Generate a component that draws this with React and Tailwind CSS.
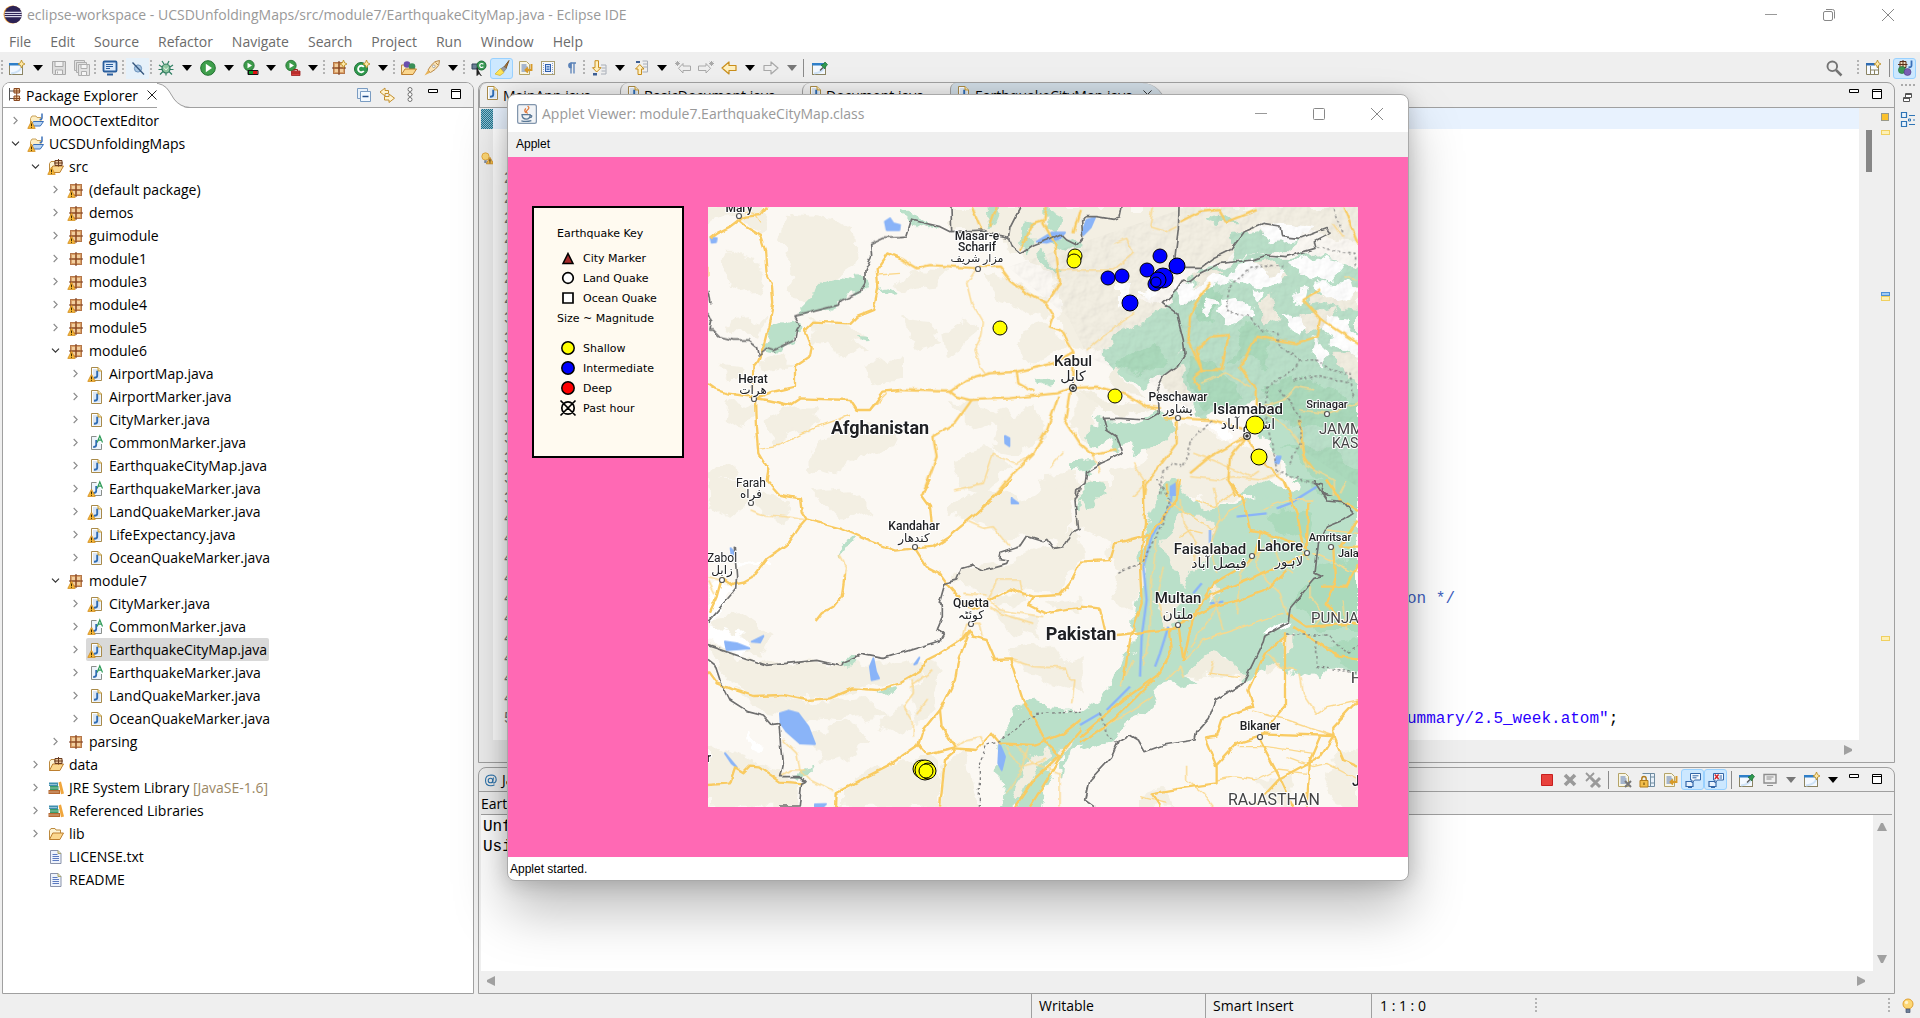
import React from "react";

/* ---------- icons (16 x 16 grid) ---------- */

const warn = (
  <g>
    <path d="M3.5 8.2 L7.2 15.4 H-.2 Z" fill="#f7b838" stroke="#d08a1a" strokeWidth=".8" strokeLinejoin="round" />
    <path d="M3.5 10.5v2.600M3.5 13.800v1" stroke="#3a2a00" strokeWidth="1" />
  </g>
);
const pkg = (
  <g>
    <rect x="2.5" y="2.5" width="11" height="11" fill="#d9a066" stroke="#b5774a" />
    <path d="M4 4h3v3H4zM9 4h3v3H9zM4 9h3v3H4zM9 9h3v3H9z" fill="#f2cf9f" />
    <path d="M8 1v14M1 8h14" stroke="#7a3b1c" strokeWidth="1.1" />
  </g>
);
const page = (
  <g>
    <path d="M3.5 1.5h6.5l3.5 3.5v9.5h-10z" fill="#fff" stroke="#a88a4a" />
    <path d="M5 3h4.5v3h3v7.5H5z" fill="#dbe7f5" />
    <path d="M10 1.5V5h3.5" fill="#f5e3b5" stroke="#c79a2c" />
  </g>
);
const jpage = (
  <g>
    {page}
    <path d="M9.2 4.8v5q0 2-3.2 2" fill="none" stroke="#2f6cb3" strokeWidth="1.9" />
  </g>
);
const apage = (
  <g>
    <path d="M8.5 1.5h-5v13h10V9" fill="#eef4fb" stroke="#8a8f8a" />
    <path d="M8.2 5v5q0 2-3 2" fill="none" stroke="#2f6cb3" strokeWidth="1.8" />
    <path d="M9.2 7.5 11.8.8l2.7 6.7M10.2 5.2h3.3" fill="none" stroke="#2c9a57" strokeWidth="1.2" />
  </g>
);
const folder = (
  <g>
    <path d="M1.5 13.5v-9l1.5-2h4l1 1.5h4.5v3" fill="#fdf3d3" stroke="#bd8a3e" />
    <path d="M1.5 13.5 4.8 7h10.7l-3.6 6.5z" fill="#fbd78e" stroke="#bd7f2f" strokeLinejoin="round" />
  </g>
);
const srcFolder = (
  <g>
    {folder}
    <path d="M7 1.5h7v5H7zM10.5 0v7.5M6 4h9" fill="#e9c79f" stroke="#6b3c20" />
  </g>
);
const project = (
  <g>
    <path d="M2.5 12V5.5L4 3h4l1 1.5h4V8" fill="#fdeec3" stroke="#caa25a" />
    <path d="M2 13 5.5 8.500h10l-3.200 4.500z" fill="#b9d6f5" stroke="#3a6fb8" strokeLinejoin="round" />
    <path d="M14 .5v4.300q0 1.800-2.400 1.700" fill="none" stroke="#3a6fb8" strokeWidth="1.500" />
  </g>
);
const win = (
  <g>
    <rect x=".5" y="3.500" width="13" height="11" fill="#f4f9ff" stroke="#8b8463" />
    <path d="M0 3h14v2.500H0z" fill="#2f7fc9" />
    <path d="M2 13.500q9-1 10.500-7" fill="none" stroke="#cfe3f7" strokeWidth="2" />
  </g>
);
const spark = <path d="M12.500 0l1.100 2.700L16 4l-2.400 1.200-1.100 2.800-1.100-2.800L9 4l2.400-1.300z" fill="#ffe9a8" stroke="#b98a1a" strokeWidth=".8" />;
const play = (
  <g>
    <circle cx="7" cy="5.500" r="5.200" fill="#3c9b4a" stroke="#20702f" strokeWidth=".8" />
    <path d="M5.500 2.800 10 5.500 5.500 8.200z" fill="#fff" />
  </g>
);
const lines = (
  <g>
    <path d="M2.500 1.500h7l3 3v10h-10z" fill="#f8f6e6" stroke="#b5a468" />
    <path d="M4.500 5h5M4.500 7h6M4.500 9h6M4.500 11h6" stroke="#5476b5" strokeWidth="1" />
  </g>
);
const wrapArrow = <path d="M14.500 4v6H9M11 7.500 8.500 10l2.500 2.500" fill="none" stroke="#d79a28" strokeWidth="1.900" />;
const pin = (
  <g>
    <path d="M8 10.500 11 7.500" stroke="#555" strokeWidth="1.200" />
    <path d="M9 5l2-.5L13 2l2.500 2.500L13.500 7l-.8 2z" fill="#2f9a4e" stroke="#1c6a34" strokeWidth=".7" />
  </g>
);

const ICONS = {
  eclipse: (
    <g>
      <circle cx="8" cy="8" r="7.600" fill="#f0a23b" />
      <circle cx="8.600" cy="8" r="7.300" fill="#2c2255" />
      <path d="M1.500 6.200h14.200M1.200 8h14.700M1.500 9.800h14.200" stroke="#d9d6ea" strokeWidth="1" />
    </g>
  ),
  newwin: <g>{win}{spark}</g>,
  save: (
    <g fill="#ddd" stroke="#a9a9a9">
      <path d="M1.500 1.500h13v13h-12l-1-1z" />
      <path d="M4 1.500h8v5H4z" fill="#f3f3f3" />
      <path d="M4.500 10h7v4.500h-7z" fill="#f3f3f3" />
      <path d="M6.500 11.500v2" />
    </g>
  ),
  saveall: (
    <g fill="#e2e2e2" stroke="#aeaeae">
      <path d="M.5.5h10v10H.5z" />
      <path d="M2.500 2.500h10v10h-10z" />
      <path d="M4.500 4.500h11v11h-11z" />
      <path d="M7 4.500h6v4H7zM7.500 11.500h5v4h-5z" fill="#f5f5f5" />
    </g>
  ),
  console: (
    <g>
      <rect x="1.500" y="1.500" width="13" height="10" rx="1" fill="#dbe9fa" stroke="#2b5f9e" strokeWidth="1.800" />
      <path d="M4 4.500h7M4 6.500h7M4 8.500h4" stroke="#2b5f9e" />
      <path d="M5 14.500h6" stroke="#2b5f9e" strokeWidth="2" />
    </g>
  ),
  skip: (
    <g>
      <circle cx="8" cy="8.500" r="3.600" fill="#a9c7e4" stroke="#6b93bd" />
      <path d="M2.500 2.500l11.500 12" stroke="#33557d" strokeWidth="1.300" />
    </g>
  ),
  bug: (
    <g>
      <path d="M4 1l2 3M11 1 9.500 4M1 5l3 2M15 5l-3 2M.5 9.500H4M15.500 9.500H12M2 14.500l3-3M14 14.500l-3-3M8 13v2.500" stroke="#2f7f62" strokeWidth="1.200" />
      <ellipse cx="8" cy="8.500" rx="4" ry="4.500" fill="#8fc6a0" stroke="#2c7a5b" strokeWidth="1.200" />
      <path d="M6 7.500l2 2.500 2-2.500" fill="none" stroke="#e7f6ea" />
    </g>
  ),
  run: (
    <g>
      <circle cx="8" cy="8" r="7.300" fill="#3f9f4c" stroke="#20702f" />
      <path d="M5.800 3.800 12 8l-6.200 4.200z" fill="#fff" />
    </g>
  ),
  coverage: (
    <g>
      {play}
      <path d="M6 10h5.500v5H6z" fill="#111" /><path d="M11 11h4.500v3H11z" fill="#d11" /><path d="M7 11h4v3H7z" fill="#0a9b28" />
      <path d="M6 10.500h10v4H6z" fill="none" stroke="#111" />
    </g>
  ),
  external: (
    <g>
      {play}
      <path d="M7.500 11h8.500v4.500H7.500z" fill="#d8403c" stroke="#9b1d1d" strokeWidth=".8" />
      <path d="M10 11V9.500h3.500V11M7.500 13H16" fill="none" stroke="#9b1d1d" />
    </g>
  ),
  newpkg: <g>{pkg}{spark}</g>,
  newclass: (
    <g>
      <circle cx="7" cy="9" r="6.500" fill="#2f9a4e" stroke="#1f6f35" />
      <path d="M9.800 7a3.200 3.200 0 1 0 0 4" fill="none" stroke="#fff" strokeWidth="1.900" />
      {spark}
    </g>
  ),
  openType: (
    <g>
      <path d="M.5 14V5h4l1 1.500h8V9" fill="#fdeec3" stroke="#bd8a3e" />
      <circle cx="6" cy="4.500" r="3.300" fill="#6a4fae" /><circle cx="11" cy="6.500" r="3.300" fill="#3a8f58" />
      <path d="M.5 14.500 4 9h11.500l-3.500 5.500z" fill="#fbd78e" stroke="#bd7f2f" />
    </g>
  ),
  rocket: (
    <g>
      <path d="M15.500.5q-5 0-8.500 5l-3 4.500 2.500 2.500 4.500-3q5-3.500 4.500-9z" fill="#fbe3b4" stroke="#b98a4a" />
      <path d="M11.500 2.500l2.500 2.500" stroke="#b98a4a" />
      <circle cx="9.800" cy="6.300" r="1.300" fill="#fff" stroke="#888" strokeWidth=".7" />
      <path d="M4 10l-3.500 5.500L6.500 12.500z" fill="#e8b257" />
    </g>
  ),
  search2: (
    <g>
      <path d="M1 4h8v5H1z" fill="#6b7f95" stroke="#34475c" />
      <circle cx="10.500" cy="5.500" r="4.500" fill="#3a9a55" stroke="#1e6b36" />
      <path d="M12.300 4.300a2 2 0 1 0 0 2.400" fill="none" stroke="#fff" strokeWidth="1.200" />
      <path d="M6 7.500v8l2-2 2.500 2.500" fill="#222" stroke="#222" />
    </g>
  ),
  brush: (
    <g>
      <path d="M15 .5 10 7l2 1.500z" fill="#a8773c" stroke="#7d5426" />
      <path d="M10 6.500 6.500 9l3 3 3-3.500z" fill="#9a9a9a" stroke="#6d6d6d" strokeWidth=".6" />
      <path d="M6.500 8.500 1 14l5 1.500 4-3z" fill="#fce35a" stroke="#d3b023" strokeWidth=".7" />
    </g>
  ),
  wrap: <g>{lines}{wrapArrow}</g>,
  block: (
    <g>
      <rect x="1.500" y="1.500" width="13" height="13" fill="#f6f8fc" stroke="#a99e72" />
      <path d="M3.500 3v11M12.500 3v11" stroke="#8ea3c6" strokeDasharray="1 1" />
      <rect x="5.500" y="4.500" width="5" height="7" fill="#cfe2fa" stroke="#2f5fae" />
      <path d="M6.500 6.500h3M6.500 8h3M6.500 9.500h3" stroke="#2f5fae" strokeWidth=".8" />
    </g>
  ),
  pilcrow: (
    <g fill="none" stroke="#5a82b8" strokeWidth="1.300">
      <path d="M7.500 3h5.500M8 3v10.500M11 3v10.500" />
      <path d="M8 3.200a2.200 2.200 0 0 0 0 4.400z" fill="#5a82b8" />
    </g>
  ),
  nextAnn: (
    <g>
      <path d="M10 5h5v9h-5M10.500 8h4M10.500 11h4" fill="none" stroke="#a8aeb8" />
      <path d="M4 .7h3.500v7H10L5.700 12 1.500 7.700H4z" fill="#fff0bf" stroke="#c98e1b" strokeLinejoin="round" />
      <path d="M2 13h4v2.500H2z" fill="#3d5f94" />
    </g>
  ),
  prevAnn: (
    <g>
      <path d="M9.500 1h5v11h-5M10 4h4M10 7h4" fill="none" stroke="#a8aeb8" />
      <path d="M5 14.500h3.500V9H11L6.800 4.500 2.500 9H5z" fill="#fff0bf" stroke="#c98e1b" strokeLinejoin="round" />
      <path d="M3 1h4v2H3z" fill="#3d5f94" />
    </g>
  ),
  lastEdit: <path d="M15.500 6v4.500H8V13L3.500 8.300 8 3.500V6zM2.500 1v5M0 3.500h5M.8 1.700l3.500 3.500M4.300 1.700.8 5.200" fill="none" stroke="#a9a9a9" />,
  nextEdit: <path d="M.5 6v4.500H8V13l4.500-4.700L8 3.500V6zM13.500 1v5M11 3.500h5M11.700 1.700l3.500 3.500M15.200 1.700l-3.500 3.500" fill="none" stroke="#a9a9a9" />,
  back: <path d="M15 5.500v5H8V14L1 8l7-6v3.500z" fill="#fff0bf" stroke="#c98e1b" strokeWidth="1.200" strokeLinejoin="round" />,
  forward: <path d="M1 5.500v5h7V14l7-6-7-6v3.500z" fill="#efefef" stroke="#a9a9a9" strokeWidth="1.200" strokeLinejoin="round" />,
  pinwin: <g>{win}{pin}</g>,
  search: (
    <g fill="none" stroke="#747474">
      <circle cx="6.300" cy="6.300" r="4.800" strokeWidth="1.900" />
      <path d="M10 10l5.500 5.500" strokeWidth="2.500" />
    </g>
  ),
  perspective: (
    <g>
      <path d="M1.500 3.500h12v11h-12z" fill="#f8fbff" stroke="#8b8463" />
      <path d="M1 3h9v2.500H1z" fill="#2f6cb3" />
      <path d="M5.500 6v8.500M5.500 10h8M9.500 10v4.500" stroke="#8b8463" fill="none" />
      {spark}
    </g>
  ),
  javaPersp: (
    <g>
      <path d="M3 1.500h6v6H3zM6 0v8.500M1 4.500h9.500" fill="#f0d8b8" stroke="#5b2f1a" />
      <path d="M14.500.5v5q0 2-3 1.700" fill="none" stroke="#3a6fb8" strokeWidth="1.800" />
      <circle cx="5" cy="10" r="3.600" fill="#3a9a55" stroke="#256b3a" strokeWidth=".6" />
      <circle cx="10.500" cy="12" r="3.500" fill="#7a5fb5" stroke="#4d3a80" strokeWidth=".6" />
    </g>
  ),
  hierarchy: (
    <g>
      <path d="M2.500 1v12.500M2.500 4H8M2.500 11.500H8" stroke="#555" fill="none" />
      <path d="M7 1.500h5.500v4.500H7zM7 9h5.500v4.500H7zM9.700 1v13M6.500 4h7M6.500 11.500h7" fill="#e9c49a" stroke="#8a4a22" />
    </g>
  ),
  collapse: (
    <g>
      <path d="M1.500 1.500h10v10h-10z" fill="#e8f1fa" stroke="#7a9cc2" />
      <path d="M4.500 4.500h10v10h-10z" fill="#f4faff" stroke="#7a9cc2" />
      <path d="M6.500 9.500h6" stroke="#24508c" strokeWidth="1.500" />
    </g>
  ),
  link: (
    <g fill="#fff3cf" stroke="#c4902f" strokeLinejoin="round">
      <path d="M9.500 3.500H6V1L1 5l5 4V6.500h3.500z" />
      <path d="M5.500 9.500H10V7l5.500 4.200L10 15.500V13H5.500z" />
    </g>
  ),
  dots: (
    <g fill="#fff" stroke="#666" strokeWidth=".9">
      <circle cx="8" cy="2.500" r="2" /><circle cx="8" cy="7.500" r="2" /><circle cx="8" cy="12.500" r="2" />
    </g>
  ),
  min: <path d="M3.500 2.500h9v3h-9z" fill="#fff" stroke="#000" />,
  max: <path d="M3.500 2.500h9v9h-9zM3.500 4.500h9" fill="#fff" stroke="#000" />,
  stop: <path d="M2.500 2.500h11v11h-11z" fill="#e8413c" stroke="#c8201f" />,
  remove: <path d="M3 3l10 10M13 3 3 13" stroke="#9a9a9a" strokeWidth="3.600" />,
  removeAll: (
    <g stroke="#9a9a9a">
      <path d="M1 1l8 8M9 1 1 9" strokeWidth="1.800" />
      <path d="M6 6l9 9M15 6l-9 9" strokeWidth="3" />
    </g>
  ),
  clear: <g>{lines}<path d="M9 9l6 6M15 9l-6 6" stroke="#777" strokeWidth="2" /></g>,
  lock: (
    <g>
      <path d="M3.500 1.500h12v13H8M11.500 1.500v13M11.500 5h4M11.500 11h4" fill="#e9f2fb" stroke="#6f8b9f" />
      <path d="M1 8.500h8v6.500H1z" fill="#f2bd4a" stroke="#b07a1a" />
      <path d="M2.800 8.500V7q0-2.500 2.200-2.500T7.200 7v1.500" fill="none" stroke="#b07a1a" strokeWidth="1.400" />
      <path d="M5 10.500v2.500" stroke="#5d3c00" />
    </g>
  ),
  stdout: (
    <g>
      <path d="M1 9.500h7v5H1z" fill="#e8f2fd" stroke="#3467a8" strokeWidth="1.200" />
      <path d="M5.500 1.500h10v6.500H9.500L7 11V8H5.500z" fill="#f5faff" stroke="#3467a8" />
      <path d="M7.500 3.800h6M7.500 5.800h4M3 15.500h4" stroke="#3467a8" />
    </g>
  ),
  stderr: (
    <g>
      <path d="M1 9.500h7v5H1z" fill="#e8f2fd" stroke="#3467a8" strokeWidth="1.200" />
      <path d="M5.500 1.500h10v6.500H9.500L7 11V8H5.500z" fill="#f5faff" stroke="#3467a8" />
      <path d="M6.800 2.500l3.800 4.500M10.600 2.500 6.800 7" stroke="#d3262b" strokeWidth="1.500" />
      <path d="M11.500 4h2.500M11.500 6h2.500M3 15.500h4" stroke="#3467a8" />
    </g>
  ),
  monitor: (
    <g>
      <path d="M2 2.500h12v8.500H2z" fill="#eee" stroke="#8d8d8d" strokeWidth="1.400" />
      <path d="M4.500 5h7M4.500 7h5M5 13.500h6" stroke="#8d8d8d" strokeWidth="1.200" />
    </g>
  ),
  restore: <path d="M5.500 3.500h6v4h-6zM3.500 7.500h6v4h-6zM5.500 4.500h6M3.500 8.500h6" fill="#fff" stroke="#555" />,
  outline: (
    <g fill="#eaf4fd" stroke="#2f74b5">
      <path d="M1.500 1.500h5v5h-5zM1.500 10.500h5v5h-5z" strokeWidth="1.200" />
      <path d="M9 4.500h6M9 13.500h6M13 9h2" />
      <path d="M8.500 8h2v2h-2z" />
    </g>
  ),
  bulb: (
    <g>
      <circle cx="8" cy="6" r="5" fill="#fdd774" stroke="#e0a030" />
      <circle cx="6.500" cy="4.500" r="1.700" fill="#fff3cf" />
      <path d="M6 11h4v3.500H6z" fill="#6e7f99" stroke="#46556d" strokeWidth=".7" />
    </g>
  ),
  bulbWarn: (
    <g>
      <circle cx="5.500" cy="5.500" r="4.500" fill="#fdd774" stroke="#e0a030" />
      <path d="M4 10h3v3.500H4z" fill="#7e8ca3" />
      <path d="M11 6.500 15.500 14.500h-9z" fill="#f9c04a" stroke="#c9861a" strokeLinejoin="round" />
      <path d="M11 9v3M11 12.800v1" stroke="#222" strokeWidth="1.200" />
    </g>
  ),
  java: (
    <g>
      <rect x=".5" y=".5" width="15" height="15" rx="1.500" fill="#f1f3f6" stroke="#8296ad" />
      <path d="M8.500 1.500q2 1.500 0 3t0 3M7 3.500q-1.500 1.500 0 3.500" fill="none" stroke="#e07a3a" />
      <path d="M4 8.500h6.500q0 3.500-3.200 3.500T4 8.500zM10.500 9q2 0 1 1.500l-1.500.5M3.500 13.500q4 1 8-.2" fill="none" stroke="#5a7896" />
    </g>
  ),
  at: (
    <g fill="none" stroke="#2e74ad" strokeWidth="1.100">
      <circle cx="7.500" cy="8.500" r="2.300" />
      <path d="M10.500 5.500l-.8 4q-.2 1.700 1.300 1.500 2.200-.7 2.200-3.500Q13 3 8 3 2.500 3.200 2.500 8.500T8 13.800q2 0 3.500-1" />
    </g>
  ),
  package: pkg,
  packageWarn: <g>{pkg}{warn}</g>,
  file: jpage,
  fileWarn: <g>{jpage}{warn}</g>,
  abs: apage,
  absWarn: <g>{apage}{warn}</g>,
  folder,
  srcFolder,
  srcWarn: <g>{srcFolder}{warn}</g>,
  project: <g>{project}{warn}</g>,
  library: (
    <g>
      <path d="M1 2.500h9v3.500H1z" fill="#3f8fb0" /><path d="M2 6h8.500v4H2z" fill="#3a9a6a" />
      <path d="M.5 10H12v4H.5z" fill="#b5672e" /><path d="M10.500 2.500l2.500-1 3 12-3 .7z" fill="#f0a63c" />
      <path d="M1 4.500h8M2 8h8M1 12h10" stroke="#fff" strokeOpacity=".45" />
    </g>
  ),
  text: (
    <g>
      <path d="M2.500 1.500h7.500l3 3v10H2.500z" fill="#eef3fc" stroke="#8a93ab" />
      <path d="M10 1.500v3h3" fill="#e8e2b5" stroke="#a9a36a" />
      <path d="M4.500 5.500h5M4.500 7.500h6.500M4.500 9.500h6.500M4.500 11.500h6.500" stroke="#5b7ac0" />
    </g>
  ),
};

function Icon({ name, className = "size-4" }) {
  return (
    <svg viewBox="0 0 16 16" className={`${className} shrink-0 overflow-visible`} aria-hidden="true">
      {ICONS[name]}
    </svg>
  );
}

function Tool({ name, active, faint }) {
  const look = active
    ? "rounded-[3px] border border-[#99d1ff] bg-[#cce8ff]"
    : faint
      ? "bg-[#e6f1fa]"
      : "";
  return (
    <button type="button" aria-label={name} className={`flex h-[21px] w-[23px] shrink-0 items-center justify-center ${look}`}>
      <Icon name={name} />
    </button>
  );
}

function Arrow({ gray }) {
  return (
    <button type="button" aria-label="More" className="flex h-[21px] w-[19px] shrink-0 items-center justify-center">
      <svg viewBox="0 0 10 6" className="h-[6px] w-[10px]">
        <path d="M0 0h10L5 6z" fill={gray ? "#777" : "#000"} />
      </svg>
    </button>
  );
}

function Handle() {
  return <span className="mx-[1px] h-4 w-[3px] shrink-0 bg-[repeating-linear-gradient(to_bottom,#b3b3b3_0_2px,transparent_2px_4px)] bg-[length:2px_100%] bg-no-repeat" />;
}

function Sep({ wide }) {
  return (
    <span className={`flex h-[18px] shrink-0 justify-center ${wide ? "w-[8px]" : "w-[5px]"}`}>
      <span className="w-px bg-[#8a8a8a]" />
    </span>
  );
}

/* ---------- package explorer ---------- */

const PAD = ["pl-[4px]", "pl-[24px]", "pl-[44px]", "pl-[64px]"];

const TREE = [
  [0, "c", "project", "MOOCTextEditor"],
  [0, "o", "project", "UCSDUnfoldingMaps"],
  [1, "o", "srcWarn", "src"],
  [2, "c", "packageWarn", "(default package)"],
  [2, "c", "packageWarn", "demos"],
  [2, "c", "packageWarn", "guimodule"],
  [2, "c", "package", "module1"],
  [2, "c", "packageWarn", "module3"],
  [2, "c", "packageWarn", "module4"],
  [2, "c", "packageWarn", "module5"],
  [2, "o", "packageWarn", "module6"],
  [3, "c", "fileWarn", "AirportMap.java"],
  [3, "c", "file", "AirportMarker.java"],
  [3, "c", "file", "CityMarker.java"],
  [3, "c", "abs", "CommonMarker.java"],
  [3, "c", "file", "EarthquakeCityMap.java"],
  [3, "c", "absWarn", "EarthquakeMarker.java"],
  [3, "c", "fileWarn", "LandQuakeMarker.java"],
  [3, "c", "fileWarn", "LifeExpectancy.java"],
  [3, "c", "file", "OceanQuakeMarker.java"],
  [2, "o", "packageWarn", "module7"],
  [3, "c", "fileWarn", "CityMarker.java"],
  [3, "c", "absWarn", "CommonMarker.java"],
  [3, "c", "fileWarn", "EarthquakeCityMap.java", "selected"],
  [3, "c", "abs", "EarthquakeMarker.java"],
  [3, "c", "file", "LandQuakeMarker.java"],
  [3, "c", "file", "OceanQuakeMarker.java"],
  [2, "c", "package", "parsing"],
  [1, "c", "srcFolder", "data"],
  [1, "c", "library", "JRE System Library", "", "[JavaSE-1.6]"],
  [1, "c", "library", "Referenced Libraries"],
  [1, "c", "folder", "lib"],
  [1, "", "text", "LICENSE.txt"],
  [1, "", "text", "README"],
];

function TreeRow({ row }) {
  const [depth, state, icon, label, selected, note] = row;
  return (
    <li className={`flex h-[23px] items-center ${PAD[depth]}`}>
      <button type="button" aria-label="Toggle" className="flex w-[17px] items-center justify-center">
        {state === "c" && (
          <svg viewBox="0 0 6 10" className="h-[9px] w-[5px]"><path d="M.8.800 5 5 .8 9.200" fill="none" stroke="#8a8a8a" strokeWidth="1.300" /></svg>
        )}
        {state === "o" && (
          <svg viewBox="0 0 10 6" className="h-[5px] w-[9px]"><path d="M.8.800 5 5 9.200.8" fill="none" stroke="#333" strokeWidth="1.400" /></svg>
        )}
      </button>
      <span className={`ml-[2px] flex h-full items-center gap-[5px] rounded-[2px] px-[2px] ${selected ? "bg-[#d9d9d9]" : ""}`}>
        <Icon name={icon} />
        <span className="whitespace-nowrap">
          {label}
          {note && <span className="text-[#9a8765]"> {note}</span>}
        </span>
      </span>
    </li>
  );
}

function PackageExplorer() {
  return (
    <section className="flex w-[472px] shrink-0 flex-col overflow-hidden rounded-t-[8px] border border-[#a0a0a0] bg-white">
      <header className="flex h-[25px] items-center border-b border-[#a0a0a0] bg-[#efefef] pr-[6px]">
        <div className="flex h-full items-center bg-white pl-[4px]">
          <Icon name="hierarchy" />
          <h2 className="ml-[3px] text-[14px]">Package Explorer</h2>
          <button type="button" aria-label="Close view" className="ml-[9px]">
            <svg viewBox="0 0 10 10" className="size-[10px]"><path d="M.5.500l9 9M9.500.5l-9 9" stroke="#222" /></svg>
          </button>
        </div>
        <svg viewBox="0 0 34 25" className="h-[25px] w-[34px]"><path d="M0 0q7 1 12 9l5 8q6 7 14 8H0z" fill="#fff" /><path d="M-4 0Q7 0 12 8l5 8q6 8 16 8.500" fill="none" stroke="#a0a0a0" /></svg>
        <div className="ml-auto flex">
          <Tool name="collapse" /><Tool name="link" /><Tool name="dots" /><Tool name="min" /><Tool name="max" />
        </div>
      </header>
      <ul className="mt-[1px] text-[14px] leading-[23px]">
        {TREE.map((row, i) => <TreeRow key={i} row={row} />)}
      </ul>
    </section>
  );
}

/* ---------- editor ---------- */

const CODE = Array.from({ length: 31 }, (_, i) => ({ number: i < 3 ? "" : i + 20 }));

function Tab({ width, children }) {
  return (
    <button type="button" role="tab" className={`flex h-full ${width} items-start rounded-tl-[8px] border-l border-[#a0a0a0] pl-[4px] pt-[2px]`}>
      <Icon name="file" />
      <span className="ml-[3px] whitespace-nowrap">{children}</span>
    </button>
  );
}

function Editor() {
  return (
    <section className="flex min-h-0 flex-col overflow-hidden rounded-t-[8px] border border-[#a0a0a0] bg-[#efefef]">
      <header className="flex h-[25px] shrink-0 items-center border-b border-[#a0a0a0] pr-[6px] text-[14px]">
        <div role="tablist" className="flex h-full">
          <Tab width="w-[141px]">MainApp.java</Tab>
          <Tab width="w-[182px]">BasicDocument.java</Tab>
          <Tab width="w-[148px]">Document.java</Tab>
          <button type="button" role="tab" aria-selected="true" className="flex h-full w-[216px] items-start rounded-tl-[8px] rounded-tr-[32px] border-x border-[#a0a0a0] bg-[#cfdbe4] pt-[2px] pl-[4px]">
            <Icon name="file" />
            <span className="ml-[4px]">EarthquakeCityMap.java</span>
            <svg viewBox="0 0 10 10" className="ml-[10px] mt-[5px] size-[9px]"><path d="M.5.500l9 9M9.500.5l-9 9" stroke="#222" /></svg>
          </button>
        </div>
        <div className="ml-auto flex"><Tool name="min" /><Tool name="max" /></div>
      </header>
      <div className="flex min-h-0 flex-1">
        <div className="flex min-w-0 flex-1 flex-col">
          <div className="flex min-h-0 flex-1">
            <div className="w-[14px] shrink-0 overflow-hidden pl-[2px]">
              <div className="mt-[1px] h-[20px] bg-[repeating-conic-gradient(#1d7391_0_25%,#8fc0cf_0_50%)] bg-[length:2px_2px]" />
              <Icon name="bulbWarn" className="mt-[23px] size-[13px]" />
            </div>
            <ol className="h-0 min-h-full flex-1 overflow-hidden bg-white font-['Liberation_Mono',monospace] text-[16px] leading-[20px]">
              {CODE.map((line, i) => (
                <li key={i} className={`flex whitespace-pre ${i === 0 ? "h-[21px] bg-[#e8f2fe]" : "h-[20px]"}`}>
                  <span className="w-[30px] text-right text-[#787878]">{line.number}</span>
                  {line.number === 44 && <code className="ml-[884px] font-[inherit] text-[#3f5fbf]">on */</code>}
                  {line.number === 50 && (
                    <code className="ml-[884px] font-[inherit]"><span className="text-[#2a00ff]">ummary/2.5_week.atom"</span>;</code>
                  )}
                </li>
              ))}
            </ol>
          </div>
          <div className="flex h-[22px] items-center justify-end pr-[7px] pb-[2px]">
            <svg viewBox="0 0 8 10" className="h-[10px] w-[8px]"><path d="M0 0l8 4v2l-8 4z" fill="#a0a0a0" /></svg>
          </div>
        </div>
        <div className="w-[22px] pl-[7px] pt-[22px]">
          <div className="h-[42px] w-[6px] bg-[#868686]" />
        </div>
        <div className="flex w-[13px] flex-col">
          <span className="mt-[5px] size-[8px] border border-[#9a9a8a] bg-[#fac12d]" />
          <span className="mt-[9px] h-[5px] w-[9px] border border-[#f0d060] bg-[#fdf0b5]" />
          <span className="mt-[157px] h-[4px] w-[9px] border border-[#4d90d8] bg-[#9fcbf5]" />
          <span className="h-[5px] w-[9px] border border-[#f0d060] bg-[#fdf0b5]" />
          <span className="mt-[335px] h-[5px] w-[9px] border border-[#f0d060] bg-[#fdf0b5]" />
        </div>
      </div>
    </section>
  );
}

function ConsoleView() {
  return (
    <section className="flex min-h-0 flex-col overflow-hidden rounded-t-[8px] border border-[#a0a0a0] bg-[#efefef]">
      <header className="flex h-[24px] shrink-0 items-center border-b border-[#a0a0a0] pr-[6px] text-[14px]">
        <Icon name="at" className="ml-[4px] size-4" />
        <span className="ml-[3px]">Javadoc</span>
        <div className="ml-auto flex items-center">
          <Tool name="stop" /><Tool name="remove" /><Tool name="removeAll" /><Sep wide />
          <Tool name="clear" /><Tool name="lock" /><Tool name="wrap" /><Tool name="stdout" active /><Tool name="stderr" active /><Sep wide />
          <Tool name="pinwin" /><Tool name="monitor" /><Arrow gray /><Tool name="newwin" /><Arrow />
          <Tool name="min" /><Tool name="max" />
        </div>
      </header>
      <p className="mx-[2px] h-[23px] shrink-0 border-b border-[#a0a0a0] text-[14px] leading-[24px]">EarthquakeCityMap</p>
      <div className="flex min-h-0 flex-1 pl-[2px]">
        <pre className="flex-1 overflow-hidden bg-white pl-[2px] pt-[2px] font-['Liberation_Mono',monospace] text-[16px] leading-[20px]">{"Unf\nUsi"}</pre>
        <div className="flex w-[21px] flex-col items-center justify-between py-[8px] pr-[4px]">
          <svg viewBox="0 0 10 8" className="h-[8px] w-[10px]"><path d="M0 8l4-8h2l4 8z" fill="#a0a0a0" /></svg>
          <svg viewBox="0 0 10 8" className="h-[8px] w-[10px]"><path d="M0 0l4 8h2l4-8z" fill="#a0a0a0" /></svg>
        </div>
      </div>
      <div className="flex h-[22px] shrink-0 items-center justify-between pr-[29px] pb-[2px] pl-[8px]">
        <svg viewBox="0 0 8 10" className="h-[10px] w-[8px]"><path d="M8 0L0 4v2l8 4z" fill="#a0a0a0" /></svg>
        <svg viewBox="0 0 8 10" className="h-[10px] w-[8px]"><path d="M0 0l8 4v2l-8 4z" fill="#a0a0a0" /></svg>
      </div>
    </section>
  );
}

/* ---------- map ---------- */

const MAP_TILES = [
  {
    at: "translate(-208 -27) scale(.33333)",
    tan: [
      "M870 110 900 115 1000 125 1040 150 1045 190 1070 220 1060 260 1000 300 960 310 940 350 890 360 870 330 890 290 860 260 870 210 840 180Z",
      "M650 240 690 215 760 240 790 290 780 330 720 340 680 310Z",
      "M624 82 800 82 780 150 740 130 700 100 624 130Z",
      "M700 430 790 420 770 460 690 455Z",
      "M930 430 1030 430 1100 470 1000 500 940 480Z",
      "M780 540 850 520 880 560 800 580Z",
      "M660 560 740 570 740 600 680 600Z",
      "M690 660 760 680 740 740 680 720Z",
      "M870 690 950 680 940 730 820 780 790 740Z",
      "M950 780 1100 730 1200 760 1180 800 1080 830 1000 880 930 860Z",
      "M640 860 690 850 700 900 660 960 624 960 624 880Z",
      "M1100 560 1200 540 1200 600 1120 610Z",
      "M980 500 1060 490 1100 510 1040 530Z",
    ],
    green: [
      "M800 480 815 445 870 425 890 430 895 450 880 480 850 495 820 515 790 510 775 490Z",
      "M900 385 940 345 945 320 1000 305 1050 310 1085 290 1095 310 1070 345 1010 365 960 385 905 402Z",
      "M1150 318 1190 312 1195 325 1160 330Z",
      "M1065 465 1115 468 1110 478 1080 475Z",
    ],
    water: ["M1155 125 1170 115 1180 130 1200 135 1198 150 1160 150Z", "M632 172 650 175 648 186 635 188Z"],
    thin: ["M775 805 840 795 950 740 1050 705", "M700 85 760 100 780 130", "M1110 690 1160 640", "M1135 285 1200 280", "M624 260v30"],
    road: [
      "M716 120 740 140 780 165 795 210 800 280 815 310 820 370 805 440 790 500 775 540 760 560 757 650",
      "M716 120 690 140 650 160 630 175",
      "M800 80 780 105 740 110 716 120",
      "M624 612 650 630 680 640 740 648 765 655 820 635 885 620 885 560 930 530 935 500 915 450 940 425 1000 428 1050 430 1070 410 1120 390 1135 320 1130 270 1165 220 1200 235",
      "M765 655 800 660 870 675 900 655 1050 660 1070 690 1110 690 1150 635 1200 630",
      "M765 660 768 740 775 820 805 870 800 900 830 930 870 960",
    ],
    border: [
      "M624 330 630 370M624 400 635 425 630 450 640 450 660 470 700 480 745 480 770 500 775 525 800 505 820 512 885 480 890 450 900 435 885 408 910 402 1015 375 1020 365 1080 335 1095 310 1095 270 1115 230 1112 190 1150 172 1200 170",
    ],
    dash: [],
  },
  {
    at: "translate(192 -17) scale(.33333)",
    tan: [
      "M150 51 840 51 835 230 750 300 640 380 560 420 480 380 470 240 360 192 300 140 150 120Z",
      "M840 51 1374 51 1374 160 1240 120 1100 90 980 180 900 230 840 220Z",
      "M480 260 600 300 760 350 800 340 700 440 560 480 500 440Z",
      "M250 240 440 330 430 380 350 340 280 320Z",
      "M130 430 200 380 240 420 140 500Z",
      "M360 440 440 400 500 470 430 510 370 500Z",
      "M0 270 60 240 150 250 100 290 20 300Z",
      "M10 390 90 400 120 460 60 480Z",
      "M150 640 260 650 330 690 230 720Z",
      "M300 700 400 650 440 700 360 790 280 780Z",
      "M520 610 600 640 570 760 520 720Z",
      "M740 740 860 700 1000 760 1120 790 1130 850 1060 900 980 960 730 960Z",
      "M180 800 260 780 330 830 240 900 170 880Z",
      "M420 860 520 850 540 960 400 960Z",
      "M640 850 740 800 730 900 660 950 630 930Z",
    ],
    green: [
      "M860 270 905 235 1010 215 1080 205 1180 210 1250 190 1374 230 1374 960 1300 930 1240 880 1150 840 1120 790 1090 740 1080 640 1010 650 930 680 880 650 850 570 800 545 830 520 855 490 845 430 795 345Z",
      "M610 500 650 440 750 380 800 350 845 420 850 480 820 530 780 560 720 580 660 550Z",
      "M600 690 700 700 780 665 830 720 810 760 720 765 650 780 620 740Z",
      "M580 710 640 730 600 775 565 770Z",
      "M540 890 590 875 620 910 590 930 545 935Z",
      "M525 825 580 815 570 845 525 850Z",
      "M415 175 450 200 485 235 455 225 425 205Z",
      "M440 150 500 140 545 165 500 180Z",
      "M260 51 300 51 270 120Z",
      "M0 60 70 90 110 115 60 100 0 75Z",
      "M380 100 400 90 400 150 370 180Z",
      "M430 60 470 80 460 130 430 110Z",
      "M1000 150 1080 130 1200 150 1150 190 1010 205Z",
      "M900 80 960 70 1000 100 940 95Z",
      "M940 960 1020 910 1100 880 1200 900 1240 880 1300 960Z",
      "M590 480 640 460 620 500Z",
      "M420 560 470 570 460 590 430 580Z",
    ],
    deep: [
      "M870 500 960 540 1020 620 930 660 880 620Z",
      "M1100 600 1180 560 1300 600 1374 640 1374 700 1200 700 1110 680Z",
      "M1040 400 1120 430 1090 520 1000 500Z",
      "M1150 760 1300 780 1374 850 1374 900 1240 860Z",
      "M660 520 760 460 800 500 720 550Z",
      "M900 300 960 290 940 400 890 380Z",
    ],
    tan2: [
      "M1060 340 1120 320 1140 380 1100 400Z",
      "M1200 380 1300 360 1320 420 1230 440Z",
      "M800 545 850 540 860 620 800 610 775 580Z",
      "M660 530 675 570 720 610 640 600Z",
      "M1230 320 1374 300 1374 360 1280 350Z",
      "M1300 500 1374 500 1374 580 1330 560Z",
      "M880 250 960 240 930 290 880 300Z",
      "M1060 230 1130 220 1160 260 1080 270Z",
      "M540 610 600 625 680 640 760 655 700 672 620 665Z",
    ],
    snow: [
      "M820 280 860 275 880 300 930 260 1000 250 950 300 870 330 850 320Z",
      "M960 330 1010 320 1050 370 1010 395 970 390Z",
      "M990 240 1060 225 1100 250 1150 235 1130 280 1060 290 1010 275Z",
      "M1160 370 1200 390 1225 420 1200 425 1170 395Z",
      "M1280 380 1340 390 1374 440 1374 500 1310 470 1280 430Z",
      "M1250 460 1280 470 1270 520 1240 500Z",
      "M1180 220 1260 200 1340 220 1300 270 1210 260Z",
      "M1240 280 1330 280 1374 310 1300 330Z",
      "M1080 110 1160 95 1240 110 1190 150 1120 160Z",
      "M660 290 690 285 680 330 660 350Z",
      "M720 310 780 290 750 330Z",
      "M930 700 990 720 960 740Z",
      "M910 340 950 350 930 380ZM1040 300 1090 310 1060 330ZM1180 310 1220 300 1210 340Z",
    ],
    water: [
      "M545 130 560 90 585 82 572 112 550 135Z",
      "M410 155 455 128 495 128 480 145 440 158Z",
      "M315 738 328 745 328 768 316 760Z",
      "M335 925 352 938 336 942Z",
      "M812 890 828 880 826 920 812 940Z",
      "M1130 800 1142 800 1136 820 1126 818Z",
    ],
    thin: [
      "M230 235 200 280 215 340 250 400 245 440 225 480 240 530 255 550",
      "M560 480 620 430 700 370",
      "M165 900 250 880 280 790 350 820 400 790",
      "M640 160 680 145 700 190 640 240 470 240",
      "M760 51 750 110 800 125 830 110",
      "M700 820 740 880 690 930",
      "M880 790 960 820 1050 860 1080 840",
      "M870 860 960 870 1000 860 1080 870 1140 850",
      "M1090 670 1150 700 1200 760 1220 830 1300 870 1300 930 1374 950",
      "M1200 660 1280 670 1374 640",
      "M1240 600 1190 590 1150 630 1090 650",
      "M1300 100 1330 140M1374 270 1330 260",
      "M580 790 600 850M450 830 490 785",
      "M900 580 980 550 1050 590",
    ],
    road: [
      "M0 600 150 605 170 620 210 630 330 625 470 610 510 595 590 590 630 600 680 615 740 650 780 655",
      "M150 605 200 570 270 550 350 545 420 530 460 520 520 485 480 420 450 410 460 380 435 340 380 310 330 270 300 230 235 230",
      "M520 485 520 590M350 545 355 580 400 605",
      "M510 605 495 690 540 760 580 795 650 780",
      "M475 620 440 720 400 790 330 860 250 960",
      "M215 630 165 700 100 740 110 800 65 920 90 960",
      "M440 340 480 280 465 160 430 100 440 51",
      "M215 51 245 120M290 51 270 110M0 205 50 235 90 225 230 235",
      "M360 180 400 100 430 90M540 60 520 130",
      "M790 680 830 685 940 690 1040 720",
      "M830 685 830 760 740 880 730 960",
      "M1040 740 990 800 985 870 1030 960",
      "M1040 740 930 800 870 850",
      "M1040 740 1080 810 1150 870 1190 960",
      "M905 540 865 450 870 380 900 320 930 280",
      "M905 540 890 480 930 440 985 435 965 540 905 540 880 560 900 600",
      "M1020 530 1070 440 1190 460 1250 440 1260 385 1210 330 1260 300",
      "M1020 530 1070 600 1070 650",
      "M1260 385 1374 460M840 95 900 65 960 60 980 95 1070 60M1330 51 1374 160",
      "M1200 690 1210 800 1240 840",
      "M800 880 800 960M830 870 835 960",
    ],
    border: [
      "M0 140 20 138 35 90 120 110 150 125 215 122 250 120 300 140 325 145 335 170 360 192 400 165 440 150 480 130 500 150 530 165 548 145 545 90 560 80 590 80 640 88 660 80 666 51",
      "M153 51 155 125M360 51 330 110 325 150",
      "M837 51 835 120 825 200 832 230M850 235 900 235 940 205 990 180 1030 125 1090 100 1140 108 1145 140 1200 145 1280 115 1290 130 1240 155 1245 175 1160 200 1100 195 1060 210 960 220 900 250 870 275 850 270 830 300 790 340 830 370 850 450 855 490 830 530 790 560 770 600 775 670 740 690 660 685 610 685 620 720 650 740 670 790 600 820 560 845 555 880 530 900 525 960",
      "M1240 880 1270 885 1265 910 1330 930 1374 960",
    ],
    dash: [
      "M1150 230 1090 225 1050 235 990 290 975 360 1050 380 1080 420 1130 430 1140 470 1200 510 1180 540 1100 590 1095 680 1120 780 1130 840 1180 860 1240 880",
      "M1300 60 1330 130M1180 570 1250 555 1350 580M1200 510 1250 510 1300 545 1350 550 1360 620M1250 170 1320 185 1365 190 1370 230",
      "M780 960 785 850 820 820 850 830 880 740 940 690",
      "M1140 600 1200 680 1200 760 1170 820",
    ],
  },
  {
    at: "translate(-8 273) scale(.33333)",
    tan: [
      "M24 500 200 560 350 545 430 560 500 570 620 540 690 560 640 600 520 610 400 650 320 655 150 640 60 590Z",
      "M100 640 230 650 330 670 500 650 560 700 430 720 330 710 200 690Z",
      "M24 800 120 830 240 880 300 910 298 980 24 980Z",
      "M330 760 430 730 520 780 440 830 360 850Z",
      "M420 930 520 880 640 840 720 840 720 980 420 980Z",
      "M735 850 790 820 838 980 730 980Z",
      "M640 650 690 540 720 550 700 680 660 740Z",
      "M750 300 830 265 930 250 1050 210 1120 150 1190 150 1220 240 1140 240 1080 330 930 320 860 340Z",
      "M870 350 970 340 960 370 890 375Z",
      "M740 100 860 20 950 60 1110 20 1120 120 1080 190 980 165 900 170 850 130Z",
      "M880 390 1000 420 1010 470 930 450Z",
      "M1040 370 1210 340 1215 420 1130 400Z",
      "M930 500 1040 490 1100 560 1180 520 1150 640 1060 600 980 570Z",
      "M30 0 110 10 150 60 90 110 40 80Z",
      "M180 30 260 60 270 120 170 100Z",
      "M340 40 450 30 520 90 420 120Z",
      "M30 410 120 400 220 470 180 530 60 480Z",
      "M600 660 640 720 600 770 530 740Z",
    ],
    green: [
      "M900 760 960 690 1000 668 1050 690 1160 700 1260 640 1260 720 1180 780 1100 810 1090 890 1085 830 1060 850 1020 980 900 980 910 900 895 800Z",
      "M1135 70 1150 20 1200 5 1225 45 1190 65 1170 80Z",
      "M420 225 430 195 465 180 460 195 430 215Z",
      "M415 553 440 548 465 550 450 565 430 566Z",
      "M545 635 590 625 570 645Z",
      "M280 875 340 865 330 880 290 890Z",
      "M1215 190 1235 200 1238 270 1220 240Z",
    ],
    deep: [],
    tan2: ["M950 900 1000 830 1040 810 1010 880 960 960 935 960Z", "M1040 850 1110 780 1080 820 1050 870Z"],
    snow: ["M24 320 60 310 100 330 24 420ZM40 440 130 470 150 500 80 510 24 480Z", "M110 245 200 250 210 258 120 256Z", "M140 770 190 800 180 810 150 800Z"],
    water: [
      "M240 700 265 692 295 700 325 740 345 792 300 790 260 755 242 730Z",
      "M510 560 520 535 528 575 537 595 515 600Z",
      "M75 485 110 490 148 505 80 510Z",
      "M155 485 190 468 180 487Z",
      "M935 55 955 70 935 70Z",
      "M643 553 658 533 650 550Z",
      "M345 973 378 972 370 980 345 980Z",
      "M898 790 915 830 905 870 895 850Z",
      "M75 820 110 862 95 850Z",
      "M1150 725 1200 700 1170 735 1150 738Z",
      "M92 205 102 215 104 240 95 225Z",
    ],
    thin: [
      "M155 90 190 105 240 108 320 120",
      "M420 225 440 260 435 290M24 290 60 300M24 300 45 340",
      "M805 125 850 145 880 140 930 200",
      "M860 370 890 300 960 300 970 350M870 360 900 390 1030 410M1000 430 900 400 870 380",
      "M790 340 860 345 M790 470 800 430 840 430 850 470",
      "M930 538 1000 560 1100 565 1110 600 1125 600 1115 670",
      "M640 600 640 640 610 680 640 730 640 770",
      "M630 620 700 570M680 660 650 700",
      "M250 780 290 820 300 870 330 900 400 935",
      "M770 800 800 780 840 770 850 800",
      "M1160 120 1200 60 1260 110M1180 120 1170 170 1240 240",
      "M240 890 270 870 320 870",
      "M940 790 1000 850 1080 880 1080 980",
      "M920 800 960 860 1040 840M985 800 960 880 920 940",
    ],
    road: [
      "M200 0 240 45 300 55 305 95 320 118 420 145 500 180 585 212 645 205 700 200 740 175 830 100 935 0",
      "M320 118 300 140 265 190 200 235 155 295 130 308 95 315 65 295 50 350 30 395",
      "M690 0 665 45 690 80 695 125M645 205 680 260 720 280 745 315 780 355 810 390",
      "M435 280 425 350 400 380 365 400 347 423",
      "M815 390 870 360 930 328 1000 350 1080 345 1110 310 1140 250 1230 240 1250 190",
      "M1000 350 985 375 1035 400 1130 385 1205 390 1215 450 1260 465",
      "M810 450 775 540 765 600 720 690 665 760 655 795 560 860 500 890 410 940 408 980",
      "M810 450 790 475 720 520 680 540 660 575 600 610 530 630 460 625 390 655 320 660 250 645 160 648 90 625 50 610 24 575",
      "M810 450 820 470 860 480 885 540 930 538 970 665 1005 720 1040 790 1080 830",
      "M720 690 725 740 765 800 765 815 735 840 720 980",
      "M655 795 680 825 765 805 830 810 875 760 900 790 1000 795 1090 760 1160 705 1260 620",
      "M1260 660 1150 740 1085 820 1000 900 945 980",
      "M1080 830 1040 900 990 980",
      "M24 915 90 910 105 865 130 880 150 860 180 862 240 905 310 910",
    ],
    border: [
      "M24 425 107 328 110 290 103 200M24 497 200 556 350 541 425 558 430 545 485 523 550 535 720 483 730 465 712 445 727 410 727 375 718 370 735 310 770 300 785 265 820 255 850 270 920 250 925 240 897 235 900 220 960 200 980 170 1030 185 1040 178 1060 205 1090 200 1115 160 1133 150 1125 60 1150 10 1165 0",
      "M24 538 45 555 60 600 90 660 140 692 190 705 215 733 240 730 245 800 250 850 242 890 300 890 315 905 305 910 298 978 237 978",
    ],
    dash: [
      "M1133 150 1195 130 1215 160 1220 235 1255 230 1255 330 1220 400 1225 450 1170 520 1190 580 1160 640 1140 690",
      "M838 980 838 850 860 795 900 785 1010 700 1140 697 1180 690 1215 740 1240 785",
    ],
  },
  {
    at: "translate(372 273) scale(.33333)",
    tan: ["M0 0 250 0 230 120 180 260 150 400 100 300 90 180 0 130Z", "M330 0 440 0 480 50 380 90Z", "M760 840 834 820 834 980 780 980 740 900Z", "M540 900 620 890 640 980 560 980Z", "M180 950 240 930 280 980 180 980Z"],
    green: [
      "M275 0 330 50 380 90 450 80 560 45 650 30 700 0 834 0 834 590 790 560 740 560 710 590 650 570 620 580 590 555 540 560 500 600 450 525 400 515 310 590 340 610 290 620 260 600 230 640 230 660 160 700 110 780 0 820 0 700 100 630 150 520 160 440 180 300 190 170 230 70Z",
      "M0 20 30 0 80 10 70 50 20 70Z",
    ],
    deep: [
      "M560 110 640 90 700 110 680 180 600 150Z",
      "M720 260 834 240 834 450 720 450 640 380Z",
      "M640 0 834 0 834 90 760 60 700 20Z",
      "M740 500 834 490 834 580Z",
    ],
    tan2: [
      "M250 170 310 110 385 110 390 200 350 270 310 320 270 260Z",
      "M235 360 285 350 290 430 260 450 230 400Z",
      "M610 490 640 470 640 510 615 535Z",
      "M380 320 410 300 405 330 385 350Z",
      "M310 590 400 520 460 540 490 590 440 590Z",
      "M560 540 590 550 570 575Z",
    ],
    snow: ["M550 465 625 420 620 440 570 470Z"],
    water: [],
    thin: [
      "M260 60 320 100 400 150 440 100 500 60M300 60 310 130 350 190 340 260",
      "M400 20 420 120 390 200 410 280M460 40 400 80 350 60",
      "M230 180 215 300 210 450 190 560M250 260 230 350 250 420",
      "M330 500 400 400 420 350M310 540 370 480 520 430 610 400M400 350 430 450",
      "M540 155 530 260 560 300 600 340 620 400M570 170 600 250 640 280",
      "M540 90 620 60 700 60M550 200 480 280 470 400",
      "M300 170 330 150 370 160M310 590 300 560 260 600",
      "M220 650 160 690 60 750M160 540 120 620",
      "M400 540 390 580 480 590M560 520 600 560 650 570",
      "M660 580 670 640 710 700 740 680 834 660M520 690 620 720 760 768",
      "M410 900 460 890 530 900 590 870 680 880",
      "M320 860 320 900 370 940 400 980M620 830 700 860 740 850 834 900",
      "M690 300 690 350 730 400 700 440M800 0 780 40M650 200 690 240",
      "M740 150 834 160M700 220 834 280M790 360 800 450",
      "M180 950 260 970M470 800 560 800 700 820",
    ],
    road: [
      "M190 0 195 130 180 260 185 370 150 480 130 600",
      "M300 0 290 60 205 170 190 250",
      "M445 0 490 60 510 150 540 155 680 200",
      "M610 0 650 100 670 190M685 65 680 215",
      "M680 220 500 300 380 350 340 410 300 430M375 350 400 310 470 270 520 230 540 155",
      "M300 435 270 450 275 510 240 580 130 660 0 770M295 435 310 540 340 410",
      "M0 245 90 240 105 190 205 165M110 465 290 445M0 380 60 385 75 450",
      "M340 410 400 380 480 360 560 330 620 270",
      "M615 460 615 570 615 680 540 770",
      "M620 470 555 520 505 630 520 680 430 710 410 770 375 775 410 860 410 910 300 925 215 940 240 980",
      "M540 770 470 790 405 860M540 780 600 895 530 970M540 760 760 768 720 830 600 895 640 980",
      "M834 660 760 740 760 768 790 840 834 860M720 770 690 840 680 980",
      "M760 200 765 300 740 370 780 420 834 430M834 250 800 320 720 320",
      "M620 400 680 440 834 430M740 0 780 60 834 90M834 120 780 200 834 200M640 440 780 530 834 535",
      "M0 790 100 720 220 600",
    ],
    border: [
      "M700 0 740 60 790 65 820 100 790 120 740 140 715 190 705 280 728 290 705 295 630 385 625 425 555 465 550 485 490 610 405 660 385 715 350 755 345 780 250 795 195 815 175 780 150 765 115 785 95 830 30 900 17 960 45 980",
    ],
    dash: ["M620 465 745 465 800 520 834 500", "M705 480 710 560 780 570 834 580", "M115 280 190 245 240 150 270 60 230 0", "M60 700 80 760 115 790"],
  },
];

const RIVERS = ["M275 40 270 80 215 170 190 260 200 360 185 470 180 590", "M150 620 80 690M60 700 0 735", "M470 110 560 100M590 85 630 70 710 20", "M340 340 365 310M265 440 240 520 225 560M390 370 430 365M390 150 390 190"];

/* [x, y, text, size, weight, anchor, color] */
const LABELS = [
  [31, 5, "Mary", 12, 500], [269, 33, "Masar-e", 12, 500], [269, 44, "Scharif", 12, 500], [269, 55, "مزار شریف", 11, 400],
  [45, 176, "Herat", 12, 500], [45, 187, "هرات", 12, 400],
  [365, 159, "Kabul", 15, 500], [365, 174, "کابل", 14, 400],
  [470, 194, "Peschawar", 12, 500], [470, 206, "پشاور", 12, 400],
  [540, 207, "Islamabad", 15, 500], [540, 222, "اسلام آباد", 14, 400],
  [619, 201, "Srinagar", 11, 500],
  [43, 280, "Farah", 12, 400], [43, 291, "فراه", 12, 400],
  [206, 323, "Kandahar", 12, 500], [206, 335, "کندهار", 12, 400],
  [14, 355, "Zabol", 12, 400], [14, 367, "زابل", 12, 400],
  [263, 400, "Quetta", 12, 500], [263, 412, "کوئٹہ", 12, 400],
  [502, 347, "Faisalabad", 15, 500], [511, 361, "فیصل آباد", 14, 400],
  [572, 344, "Lahore", 15, 500], [581, 359, "لاہور", 13, 400],
  [622, 334, "Amritsar", 11, 500], [630, 350, "Jala", 11, 500, "start"],
  [470, 396, "Multan", 15, 500], [470, 412, "ملتان", 14, 400],
  [552, 523, "Bikaner", 12, 500],
  [643, 476, "H", 14, 500, "start", "#555"], [644, 579, "J", 14, 500, "start"],
  [611, 227, "JAMM", 15, 400, "start", "#444"], [624, 241, "KAS", 14, 400, "start", "#444"],
  [603, 416, "PUNJA", 15, 400, "start", "#444"],
  [520, 598, "RAJASTHAN", 16, 400, "start", "#444"],
  [3, 555, "r", 13, 500, "end"],
  [172, 227, "Afghanistan", 18, 700], [373, 433, "Pakistan", 18, 700],
];

const DOTS = [[31, 9], [270, 62], [46, 192], [470, 211], [619, 207], [43, 296], [207, 340], [14, 373], [263, 417], [544, 349], [599, 346], [623, 340], [470, 418], [552, 530]];
const CAPITALS = [[365, 181], [539, 229]];

/* [x, y, radius, color] */
const QUAKES = [
  [367, 49, 7, "#ff0"], [366, 54, 7, "#ff0"], [292, 121, 7, "#ff0"], [407, 189, 7, "#ff0"],
  [547, 218, 9, "#ff0"], [551, 250, 8, "#ff0"],
  [400, 71, 7, "#00f"], [414, 69, 7, "#00f"], [439, 63, 7, "#00f"], [452, 49, 7, "#00f"], [469, 59, 8, "#00f"],
  [455, 71, 10, "#00f"], [447, 77, 7, "#00f"], [450, 73, 8, "#00f"], [448, 75, 5, "#00f"], [422, 96, 8, "#00f"],
  [214, 562, 9, "#ff0"], [217, 563, 10, "#ff0"], [220, 564, 8, "#ff0"], [218, 564, 7, "#ff0"],
];

const COLORS = { tan: "#f3efe3", green: "#bae0c9", deep: "#abdabc", tan2: "#f1ede0", snow: "#ffffff", water: "#8ab4f8" };

function MapView() {
  const fills = (kind) =>
    MAP_TILES.map((t, i) => (
      <g key={kind + i} transform={t.at} clipPath={`url(#tile${i})`}>
        {(t[kind] || []).map((d, k) => <path key={k} d={d} fill={COLORS[kind]} stroke={COLORS[kind]} strokeWidth="6" strokeLinejoin="round" />)}
      </g>
    ));
  const strokes = (kind, color, width, dash) =>
    MAP_TILES.map((t, i) => (
      <g key={kind + width + i} transform={t.at} fill="none" stroke={color} strokeWidth={width} strokeLinejoin="round" strokeDasharray={dash} clipPath={`url(#tile${i})`}>
        {t[kind].map((d, k) => <path key={k} d={d} />)}
      </g>
    ));
  return (
    <svg viewBox="0 0 650 600" className="h-[600px] w-[650px] shrink-0 bg-[#fbf8f3]" role="img" aria-label="Earthquake map">
      <defs>
        <clipPath id="tile0"><path d="M610 60h594v840H610z" /></clipPath>
        <clipPath id="tile1"><path d="M-4 30h1400v888H-4z" /></clipPath>
        <clipPath id="tile2"><path d="M0-2h1142v1004H0z" /></clipPath>
        <clipPath id="tile3"><path d="M-2 0h860v1004H-2z" /></clipPath>
        <filter id="terrain" filterUnits="userSpaceOnUse" x="-10" y="-10" width="670" height="620">
          <feTurbulence type="fractalNoise" baseFrequency="0.045" numOctaves="4" seed="11" result="n" />
          <feDisplacementMap in="SourceGraphic" in2="n" scale="22" xChannelSelector="R" yChannelSelector="G" />
        </filter>
        <filter id="wander" filterUnits="userSpaceOnUse" x="-10" y="-10" width="670" height="620">
          <feTurbulence type="fractalNoise" baseFrequency="0.09" numOctaves="2" seed="4" result="n" />
          <feDisplacementMap in="SourceGraphic" in2="n" scale="5" xChannelSelector="R" yChannelSelector="G" />
        </filter>
        <filter id="relief" x="0" y="0" width="100%" height="100%">
          <feTurbulence type="fractalNoise" baseFrequency="0.09" numOctaves="3" seed="7" />
          <feDiffuseLighting surfaceScale="2" lightingColor="#fff" result="lit"><feDistantLight azimuth="225" elevation="62" /></feDiffuseLighting>
          <feComposite in="lit" in2="SourceAlpha" operator="in" />
        </filter>
      </defs>
      <g filter="url(#terrain)">
        {fills("tan")}
        {fills("green")}
        {fills("deep")}
        {fills("tan2")}
        {fills("snow")}
      </g>
      <path d="M300 60 480 0 650 0 650 280 590 240 560 190 490 210 450 180 380 150 360 110Z" fill="#000" filter="url(#relief)" className="opacity-25 mix-blend-multiply" />
      {fills("water")}
      <g transform="translate(372 273) scale(.33333)" fill="none" stroke="#8ab4f8" strokeWidth="7">
        {RIVERS.map((d) => <path key={d} d={d} />)}
      </g>
      <g filter="url(#wander)">
        {strokes("thin", "#fbd88b", 4)}
        {strokes("road", "#f9cb62", 7)}
        {strokes("border", "#6f6f6f", 5)}
        {strokes("dash", "#808080", 4, "8 8")}
      </g>
      {DOTS.map(([x, y]) => <circle key={`${x}-${y}`} cx={x} cy={y} r="2.500" fill="#fff" stroke="#555" strokeWidth="1.200" />)}
      {CAPITALS.map(([x, y]) => (
        <g key={x}>
          <circle cx={x} cy={y} r="3.300" fill="#fff" stroke="#333" strokeWidth="1.200" />
          <circle cx={x} cy={y} r="1.800" fill="#333" />
        </g>
      ))}
      <g className="font-[Roboto,'DejaVu_Sans',sans-serif]" stroke="#fff" strokeWidth="2" strokeLinejoin="round" paintOrder="stroke">
        {LABELS.map(([x, y, text, size, weight, anchor = "middle", color = "#202124"]) => (
          <text key={text} x={x} y={y} fontSize={size} fontWeight={weight} textAnchor={anchor} fill={color}>{text}</text>
        ))}
      </g>
      {QUAKES.map(([x, y, r, color], i) => <circle key={i} cx={x} cy={y} r={r} fill={color} stroke="#000" />)}
    </svg>
  );
}

/* ---------- applet window ---------- */

const KEY_ICONS = {
  city: <path d="M11 4.500 16 14.500H6z" fill="#a52a2a" stroke="#000" strokeWidth="1.500" />,
  land: <circle cx="11" cy="9" r="5.300" fill="#fff" stroke="#000" strokeWidth="1.700" />,
  ocean: <path d="M6 4h10v10H6z" fill="#fff" stroke="#000" strokeWidth="1.700" />,
  shallow: <circle cx="11" cy="9" r="6.200" fill="#ff0" stroke="#000" strokeWidth="1.500" />,
  intermediate: <circle cx="11" cy="9" r="6.200" fill="#00f" stroke="#000" strokeWidth="1.500" />,
  deep: <circle cx="11" cy="9" r="6.200" fill="#f00" stroke="#000" strokeWidth="1.500" />,
  past: <path d="M11 2.800a6.200 6.200 0 1 1 0 12.400a6.200 6.200 0 1 1 0-12.400M3.500 1.500l15 15M18.500 1.500l-15 15" fill="none" stroke="#000" strokeWidth="1.700" />,
};

function KeyRow({ icon, children }) {
  return (
    <li className="flex h-[20px] items-center gap-[4px]">
      <svg viewBox="0 0 22 20" className="h-[20px] w-[22px]">{KEY_ICONS[icon]}</svg>
      {children}
    </li>
  );
}

function EarthquakeKey() {
  return (
    <aside className="w-[152px] shrink-0 border-2 border-black bg-[#fffaf0] pt-[16px] pb-[37px] pl-[23px] font-['DejaVu_Sans',sans-serif] text-[11px] leading-[20px]">
      <h3>Earthquake Key</h3>
      <ul className="mt-[5px]">
        <KeyRow icon="city">City Marker</KeyRow>
        <KeyRow icon="land">Land Quake</KeyRow>
        <KeyRow icon="ocean">Ocean Quake</KeyRow>
      </ul>
      <p>Size ~ Magnitude</p>
      <ul className="mt-[10px]">
        <KeyRow icon="shallow">Shallow</KeyRow>
        <KeyRow icon="intermediate">Intermediate</KeyRow>
        <KeyRow icon="deep">Deep</KeyRow>
        <KeyRow icon="past">Past hour</KeyRow>
      </ul>
    </aside>
  );
}

function AppletWindow() {
  return (
    <div className="absolute top-[94px] left-[507px] w-[902px] overflow-hidden rounded-[8px] border border-[#a9a9a9] bg-white shadow-[0_30px_54px_rgba(0,0,0,0.26),0_2px_20px_rgba(0,0,0,0.18)]">
      <div className="flex h-[37px] items-center pr-[2px] pl-[9px] text-[14px] text-[#999]">
        <Icon name="java" className="size-[20px]" />
        <h1 className="ml-[5px]">Applet Viewer: module7.EarthquakeCityMap.class</h1>
        <div className="ml-auto flex">
          <button type="button" aria-label="Minimize" className="flex w-[58px] justify-center"><svg viewBox="0 0 12 12" className="size-3"><path d="M0 5.500h12" stroke="#999" /></svg></button>
          <button type="button" aria-label="Maximize" className="flex w-[58px] justify-center"><svg viewBox="0 0 12 12" className="size-3"><rect x=".5" y=".5" width="11" height="11" rx="1" fill="none" stroke="#888" /></svg></button>
          <button type="button" aria-label="Close" className="flex w-[58px] justify-center"><svg viewBox="0 0 12 12" className="size-3"><path d="M0 0l12 12M12 0 0 12" stroke="#888" /></svg></button>
        </div>
      </div>
      <div className="flex h-[25px] items-center bg-[#efefef] px-[8px] pb-[2px] font-['Liberation_Sans',sans-serif] text-[12px]">
        <button type="button">Applet</button>
      </div>
      <div className="flex items-start gap-[24px] bg-[#ff69b4] pt-[49px] pb-[50px] pl-[24px]">
        <EarthquakeKey />
        <div className="mt-[1px]"><MapView /></div>
      </div>
      <p className="h-[23px] px-[2px] font-['Liberation_Sans',sans-serif] text-[12px] leading-[24px]">Applet started.</p>
    </div>
  );
}

/* ---------- shell ---------- */

const MENUS = ["File", "Edit", "Source", "Refactor", "Navigate", "Search", "Project", "Run", "Window", "Help"];

export default function App() {
  return (
    <div className="relative flex min-h-screen flex-col overflow-hidden bg-[#efefef] font-['Open_Sans',sans-serif] text-black">
      <div className="flex h-[29px] items-center bg-white pr-[2px] pl-[3px] text-[14px] text-[#999]">
        <Icon name="eclipse" className="size-[19px]" />
        <span className="ml-[5px]">eclipse-workspace - UCSDUnfoldingMaps/src/module7/EarthquakeCityMap.java - Eclipse IDE</span>
        <div className="ml-auto flex">
          <button type="button" aria-label="Minimize" className="flex w-[58px] justify-center"><svg viewBox="0 0 12 12" className="size-3"><path d="M0 5.500h12" stroke="#999" /></svg></button>
          <button type="button" aria-label="Restore" className="flex w-[58px] justify-center"><svg viewBox="0 0 12 12" className="size-3" fill="none" stroke="#888"><rect x=".5" y="2.500" width="9" height="9" rx="1.500" /><path d="M3 .500h6.500q2 0 2 2v7" /></svg></button>
          <button type="button" aria-label="Close" className="flex w-[60px] justify-center"><svg viewBox="0 0 12 12" className="size-3"><path d="M0 0l12 12M12 0 0 12" stroke="#888" /></svg></button>
        </div>
      </div>
      <nav className="flex h-[23px] items-center gap-[1px] bg-white pt-[2px] text-[14px] leading-[21px] text-[#6b6b6b]">
        {MENUS.map((m) => <button type="button" key={m} className="px-[9px]">{m}</button>)}
      </nav>
      <div className="flex h-[30px] items-center pt-[2px]">
        <Handle /><Tool name="newwin" /><Arrow /><Tool name="save" /><Tool name="saveall" />
        <Handle /><Tool name="console" /><Handle /><Tool name="skip" faint /><Handle />
        <Tool name="bug" /><Arrow /><Tool name="run" /><Arrow /><Tool name="coverage" /><Arrow /><Tool name="external" /><Arrow />
        <Handle /><Tool name="newpkg" /><Tool name="newclass" /><Arrow />
        <Handle /><Tool name="openType" /><Tool name="rocket" /><Arrow />
        <Handle /><Tool name="search2" /><Tool name="brush" active /><Tool name="wrap" /><Tool name="block" /><Tool name="pilcrow" />
        <Handle /><Tool name="nextAnn" /><Arrow /><Tool name="prevAnn" /><Arrow /><Tool name="lastEdit" /><Tool name="nextEdit" />
        <Tool name="back" /><Arrow /><Tool name="forward" /><Arrow gray /><Sep />
        <div className="ml-[2px] flex"><Tool name="pinwin" /></div>
        <div className="ml-auto flex items-center pr-[4px]">
          <Tool name="search" />
          <span className="w-[11px]" />
          <Handle /><Tool name="perspective" /><span className="w-[1px]" /><Sep wide /><Tool name="javaPersp" active />
        </div>
      </div>
      <div className="flex flex-1 pl-[2px]">
        <PackageExplorer />
        <main className="ml-[4px] grid min-w-0 flex-1 grid-rows-[3fr_1fr] gap-[4px]">
          <Editor />
          <ConsoleView />
        </main>
        <aside className="flex w-[25px] shrink-0 flex-col items-center">
          <span className="mt-[2px] h-[2px] w-[14px] bg-[repeating-linear-gradient(to_right,#aaa_0_2px,transparent_2px_4px)]" />
          <div className="mt-[1px] flex flex-col"><Tool name="restore" /><Tool name="outline" /></div>
        </aside>
      </div>
      <footer className="flex h-[24px] items-center text-[14px]">
        <div className="flex h-full flex-1 items-center justify-end pr-[348px]">
          <span className="flex h-full w-[174px] items-center border-l border-[#a0a0a0] pb-[2px] pl-[7px]">Writable</span>
          <span className="flex h-full w-[166px] items-center border-l border-[#a0a0a0] pb-[2px] pl-[7px]">Smart Insert</span>
          <span className="flex h-full w-[163px] items-center border-l border-[#a0a0a0] pb-[2px] pl-[8px]">1 : 1 : 0</span>
          <Handle />
        </div>
        <Handle />
        <button type="button" aria-label="Tip of the day" className="mr-[4px] ml-[8px]"><Icon name="bulb" /></button>
      </footer>
      <AppletWindow />
    </div>
  );
}
